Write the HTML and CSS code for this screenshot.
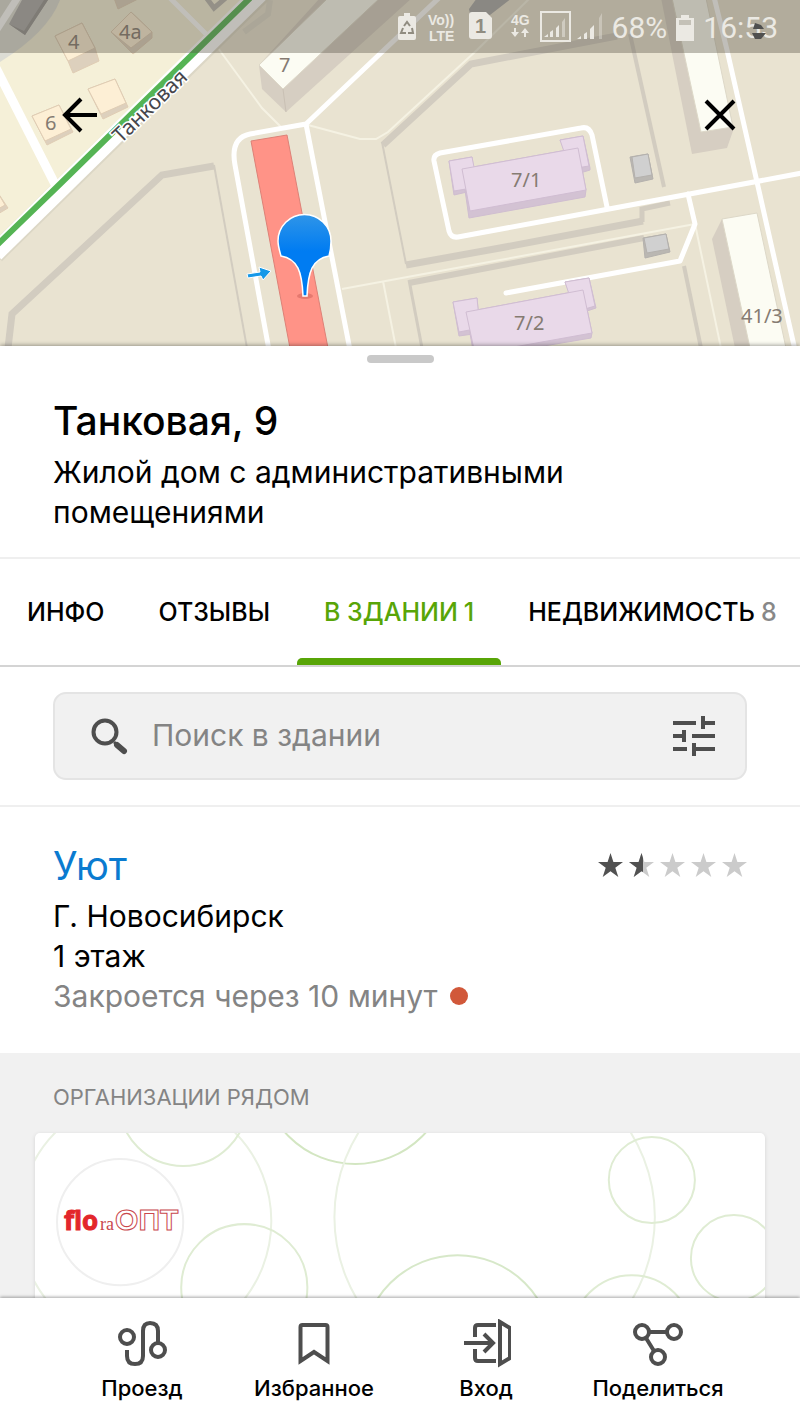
FILE: index.html
```html
<!DOCTYPE html>
<html lang="ru">
<head>
<meta charset="utf-8">
<meta name="viewport" content="width=device-width, initial-scale=1">
<title>Танковая, 9</title>
<link rel="stylesheet" href="styles.css">
</head>
<body>
<div class="app">
  <header class="map">
    <svg class="map-canvas" viewBox="0 0 800 346" preserveAspectRatio="xMidYMid slice" role="img" aria-label="Карта">
      <defs>
        <linearGradient id="pin" x1="0" y1="0" x2="0" y2="1"><stop offset="0" stop-color="#2f95e8"/><stop offset=".45" stop-color="#007cf2"/><stop offset="1" stop-color="#007cf2"/></linearGradient>
      </defs>
      <rect width="800" height="346" fill="#e9e3d1"/>
      <path d="M0 0H249L0 243Z" fill="#f5f0d8"/>
      <path d="M0 0H60Q48 32 0 62Z" fill="#dcdcd4"/>
      <path d="M-4 31L18-3" stroke="#fff" stroke-width="7"/>
      <path d="M9 24L22 0H48L25 35Z" fill="#aaa9a9"/><path d="M9 24L24 31L44 0H48L25 35Z" fill="#959391"/>
      <!-- fences -->
      <g fill="none" stroke="#d2ccc0">
        <path d="M8 348L12 314L162 175L214 166" stroke-width="7"/>
        <path d="M214 165L247 348" stroke-width="2"/>
        <path d="M383 145L471 64L617 36" stroke-width="7"/>
        <path d="M382 142L406 264" stroke-width="2"/>
        <path d="M406 265L500 248L643 221" stroke-width="7"/>
        <path d="M642 222V209L670 203" stroke-width="5"/>
        <path d="M644 238L409 283" stroke-width="6"/>
        <path d="M409 280L422 348" stroke-width="3"/>
        <path d="M630 34L664 187" stroke-width="4"/>
        <path d="M684 266L701 348" stroke-width="4"/>
        <path d="M205-4L214 8L228-4" stroke="#b8b5af" stroke-width="5"/>
        <path d="M244 32L268 14L270 0" stroke="#ddd9ca" stroke-width="6"/>
      </g>
      <!-- footpaths -->
      <g fill="none" stroke="#f5f2e3" stroke-width="2">
        <path d="M218 48L262 108L281 127M308 125L360 139H376L388 132L477 50L532-4M342 289L500 260L695 224M383 281L396 348M695 224L721 348"/>
      </g>
      <!-- roads -->
      <g fill="none" stroke="#fff" stroke-linejoin="round">
        <path d="M-5 254L262-7" stroke="#dcd7c6" stroke-width="20"/>
        <path d="M-5 253L260-7" stroke-width="18"/>
        <path d="M-4 68L57 188" stroke-width="9"/>
        <path d="M170-2L208 36" stroke-width="5"/>
        <path d="M269 350L235 165Q230 138 250 134L306 124L441-4M306 124L350 350" stroke-width="5"/>
        <path d="M607 207L592 135Q589 126 581 128L440 153Q433 155 434 161L449 231Q451 238 458 237L550 220L802 173" stroke-width="5"/>
        <path d="M506 293L680 261L695 224L688 194" stroke-width="5" stroke-linecap="round"/>
        <path d="M714-3L727 50L757 182L795 350" stroke-width="5"/>
      </g>
      <path d="M-4 246L60 184L250-2" stroke="#55b454" stroke-width="6" fill="none"/>
      <!-- small houses -->
      <g stroke="#e0cdb4" stroke-width="1">
        <path d="M55 36L68 61L73 73L99 61L95 48L82 23Z" fill="#ddd0bd"/><path d="M55 36L82 23L95 48L68 61Z" fill="#fdefd5"/>
        <path d="M111 32L133 54L152 38V32L131 12Z" fill="#ddd0bd"/><path d="M131 12L152 32L131 48L111 32Z" fill="#fdefd5"/>
        <path d="M114-2L118 9L140-2Z" fill="#ddd0bd"/>
        <path d="M88 89L103 119L128 107L115 79Z" fill="#ddd0bd"/><path d="M88 89L115 79L126 103L101 114Z" fill="#fdefd5"/>
        <path d="M32 116L47 145L73 132L59 105Z" fill="#ddd0bd"/><path d="M32 116L59 105L71 129L45 141Z" fill="#fdefd5"/>
        <path d="M-2 193L8 208L-2 214Z" fill="#ddd0bd"/><path d="M-2 193L5 205L-2 209Z" fill="#fdefd5"/>
      </g>
      <!-- tall houses -->
      <g fill="#d6cec2">
        <path d="M259 65L262 89L286 112L412-2H320Z"/>
        <path d="M661-2L692 154L727 148L734 128L701-2Z"/>
        <path d="M712 239L722 219L760 348H735Z"/>
      </g>
      <path d="M286 112L283 89L259 65" fill="none" stroke="#c9c0b4"/>
      <g fill="#fcfcf3" stroke="#ddd8c8" stroke-width="1">
        <path d="M259 65L283 89L380-2H328Z"/>
        <path d="M672-2L701 132L733 127L706-2Z"/>
        <path d="M722 219L757 213L786 348H750Z"/>
      </g>
      <path d="M469 9L477-2H512L490 15L470 14Z" fill="#a9a8a8"/>
      <!-- public buildings -->
      <g stroke="#cfbdd0" stroke-width="1" fill="#d3c2d3">
        <path d="M449 161L454 195L476 190L472 157Z"/><path d="M560 140L583 136L590 168V170L580 173Z"/><path d="M462 169L469 218L585 197L586 190L578 148Z"/>
        <path d="M453 302L459 336L480 333L477 298Z"/><path d="M565 282L589 278L596 308L578 314Z"/><path d="M466 312L473 350H520L591 338L592 333L583 290Z"/>
      </g>
      <g stroke="#d0bdd2" stroke-width="1" fill="#e9d9e9">
        <path d="M449 161L472 157L478 187L454 191Z"/><path d="M560 140L583 136L589 166L570 169Z"/><path d="M462 169L578 148L586 190L470 211Z"/>
        <path d="M453 302L477 298L480 328L459 332Z"/><path d="M565 282L589 278L595 306L575 312Z"/><path d="M466 312L583 290L592 333L475 354Z"/>
      </g>
      <g stroke="#b4b1ad" stroke-width="1">
        <path d="M630 157L635 183L653 179L648 154Z" fill="#bab7b2"/><path d="M632 157L648 154L652 175L635 178Z" fill="#d0d0d0"/>
        <path d="M643 238L645 258L670 252L666 234Z" fill="#bab7b2"/><path d="M644 238L666 234L669 249L647 253Z" fill="#d0d0d0"/>
      </g>
      <path d="M251 141L287 135L328 348H290Z" fill="#ff9387" stroke="#dd8177"/>
      <!-- entrance and pin -->
      <path d="M247 274L260 272L259 267L271 271L263 280L261 276L248 278Z" fill="#1598e8" stroke="#fff" stroke-width="1"/>
      <ellipse cx="305" cy="296" rx="8" ry="3" fill="#e5796f"/>
      <path d="M303 296C302 272 298 259 281 256C279 249 278 246 278 241A26.500 26.500 0 0 1 331 241C331 246 331 249 329 256C312 259 308 272 307 296Z" fill="url(#pin)" stroke="#fff" stroke-width="1.500"/>
      <!-- labels -->
      <g class="map-label">
        <text x="68" y="49">4</text><text x="119" y="39">4а</text><text x="45" y="130">6</text><text x="279" y="72">7</text>
        <text x="511" y="187">7/1</text><text x="514" y="330">7/2</text><text x="741" y="323">41/3</text>
        <text class="street" transform="translate(121 144) rotate(-44)">Танковая</text>
      </g>
    </svg>
    <div class="status">
      <svg class="status-icons" viewBox="0 0 210 34" aria-hidden="true">
        <path d="M6 5H8V2H14V5H18Q20 5 20 7V27Q20 29 18 29H4Q2 29 2 27V7Q2 5 4 5Z" fill="currentColor"/>
        <path d="M8 15L11 11L14 15M16 17L17 22H12M10 22H5L7 17" fill="none" stroke="#908c80" stroke-width="2"/>
        <g class="status-mini"><text x="32" y="14">Vo))</text><text x="33" y="30">LTE</text><text x="115" y="14">4G</text></g>
        <path d="M76 1H90L96 7V25Q96 28 93 28H76Q73 28 73 25V4Q73 1 76 1Z" fill="currentColor"/>
        <text class="status-sim" x="79" y="22">1</text>
        <path d="M118 17V21H115L119 26L123 21H120V17ZM128 26V22H125L129 17L133 22H130V26Z" fill="currentColor"/>
        <rect x="145" y="1" width="29" height="29" fill="none" stroke="currentColor" stroke-width="2"/>
        <path d="M148 26H152V23ZM154 26H157V19L154 21ZM160 26H163V14L160 17Z" fill="currentColor"/>
        <path d="M166 26H169V7L166 11Z" fill="currentColor" opacity=".5"/>
        <path d="M181 28H185V25ZM188 28H191V21L188 23ZM194 28H198V14L194 18Z" fill="currentColor"/>
        <path d="M203 28H206V2L203 7Z" fill="currentColor" opacity=".4"/>
      </svg>
      <span>68%</span>
      <svg class="battery" viewBox="0 0 18 28" aria-hidden="true"><path d="M0 4H5V1H13V4H18V27H0Z" fill="currentColor"/><path d="M3 6H15V11H3Z" fill="#aaa69a" opacity=".6"/></svg>
      <span class="clock">16:53</span>
      <svg class="speck" viewBox="0 0 18 20" aria-hidden="true"><path d="M5 2L11 4L14 8H3ZM2 12H16L11 18H5Z" fill="#50504f"/></svg>
    </div>
    <div class="map-actions">
      <button type="button" aria-label="Назад"><svg viewBox="0 0 36 36"><path d="M35 18H3M19 2L3 18L19 34" fill="none" stroke="#000" stroke-width="4"/></svg></button>
      <button type="button" aria-label="Закрыть"><svg viewBox="0 0 36 36"><path d="M4 4L32 32M32 4L4 32" fill="none" stroke="#000" stroke-width="4"/></svg></button>
    </div>
  </header>

  <main class="sheet">
    <div class="handle"></div>
    <section class="heading">
      <h1>Танковая, 9</h1>
      <p>Жилой дом с административными помещениями</p>
    </section>
    <nav class="tabs" aria-label="Разделы">
      <a href="#info">ИНФО</a>
      <a href="#reviews">ОТЗЫВЫ</a>
      <a href="#inside" class="active" aria-current="page">В ЗДАНИИ<span class="count">1</span></a>
      <a href="#estate">НЕДВИЖИМОСТЬ<span class="count">8</span></a>
    </nav>
    <form class="search-row">
      <div class="search">
        <svg class="search-icon" viewBox="0 0 38 38" aria-hidden="true"><circle cx="15" cy="15" r="11.500" fill="none" stroke="#4e4e4e" stroke-width="4"/><path d="M24 25L34 34" stroke="#4e4e4e" stroke-width="3"/><path d="M27 28L34 34" stroke="#4e4e4e" stroke-width="6" stroke-linecap="round"/></svg>
        <input type="search" placeholder="Поиск в здании" aria-label="Поиск в здании">
        <button type="button" aria-label="Фильтры"><svg viewBox="0 0 42 40"><path d="M0 7H23M29 7H42M30 0V13M0 20H12M19 20H42M11 14V26M0 33H14M20 33H42M21 27V40" fill="none" stroke="#4e4e4e" stroke-width="4"/></svg></button>
      </div>
    </form>
    <article class="place">
      <div class="place-top">
        <h2><a href="#uyut">Уют</a></h2>
        <svg class="stars" viewBox="0 0 149 26" role="img" aria-label="Оценка 1,5 из 5">
          <defs><path id="star" d="M12.500 0L15.400 9H25L17.300 14.700L20.300 24L12.500 18.300L4.700 24L7.700 14.700L0 9H9.600Z"/></defs>
          <use href="#star" fill="#515151"/>
          <use href="#star" x="31" fill="#cbcbcb"/><path d="M43.500 0L45 5V19L43.500 18.300L35.700 24L38.700 14.700L31 9H40.600Z" fill="#515151"/>
          <use href="#star" x="62" fill="#cbcbcb"/><use href="#star" x="93" fill="#cbcbcb"/><use href="#star" x="124" fill="#cbcbcb"/>
        </svg>
      </div>
      <p>Г. Новосибирск</p>
      <p>1 этаж</p>
      <p class="closing"><span>Закроется через 10 минут</span><i class="dot"></i></p>
    </article>
    <section class="nearby">
      <h3>ОРГАНИЗАЦИИ РЯДОМ</h3>
      <a class="card" href="#flora" aria-label="floraОПТ">
        <svg viewBox="0 0 729 200" preserveAspectRatio="xMinYMin slice">
          <g fill="none" stroke="#dfecd3" stroke-width="2">
            <circle cx="110" cy="88" r="126" stroke="#eaf1e3"/>
            <circle cx="148" cy="-31" r="64"/>
            <circle cx="320" cy="-63" r="94" stroke="#d3e6c2"/>
            <circle cx="459" cy="84" r="160" stroke="#eaf1e3"/>
            <circle cx="209" cy="154" r="63"/>
            <circle cx="422" cy="217" r="95" stroke="#d7e8c9"/>
            <circle cx="616" cy="47" r="43"/>
            <circle cx="698" cy="125" r="43"/>
            <circle cx="596" cy="202" r="60"/>
          </g>
          <circle cx="85" cy="89" r="63" fill="#fff" stroke="#efefef" stroke-width="2"/>
          <text class="logo-flo" x="29" y="97">flo</text>
          <text class="logo-ra" x="65" y="97">ra</text>
          <text class="logo-opt" x="80" y="97">ОПТ</text>
        </svg>
      </a>
    </section>
  </main>

  <nav class="bottom" aria-label="Действия">
    <button type="button">
      <svg viewBox="0 0 50 50"><g fill="none" stroke="#4e4e4e" stroke-width="4"><circle cx="10" cy="18" r="7"/><circle cx="41" cy="31" r="7"/><path d="M10 31V37Q10 45 18 45Q26 45 26 37V12Q26 4 33 4Q41 4 41 12V24"/></g></svg>
      <span>Проезд</span>
    </button>
    <button type="button">
      <svg viewBox="0 0 50 50"><path d="M11.500 42V8Q11.500 6 13.500 6H36.500Q38.500 6 38.500 8V42L25 33Z" fill="none" stroke="#4e4e4e" stroke-width="4"/></svg>
      <span>Избранное</span>
    </button>
    <button type="button">
      <svg viewBox="0 0 50 50"><g fill="none" stroke="#4e4e4e" stroke-width="4"><path d="M35 6H17Q14 6 14 9V18M14 30V39Q14 42 17 42H35M3 24H32M23 15L32 24L23 33M39 3L49 9V39L39 45Z"/></g></svg>
      <span>Вход</span>
    </button>
    <button type="button">
      <svg viewBox="0 0 50 50"><g fill="none" stroke="#4e4e4e" stroke-width="4"><circle cx="9" cy="13" r="7"/><circle cx="41" cy="13" r="7"/><circle cx="25" cy="38" r="7"/><path d="M16 13H34M13 19L21 32"/></g></svg>
      <span>Поделиться</span>
    </button>
  </nav>
</div>
</body>
</html>
```
FILE: styles.css
```css
* { box-sizing: border-box; }
body { margin: 0; background: #fff; color: #000; font: 30px/40px Inter, "Liberation Sans", sans-serif; }
h1, h2, h3, p { margin: 0; font-weight: 400; }
a { color: inherit; text-decoration: none; }
button { padding: 0; border: 0; background: none; color: inherit; font: inherit; cursor: pointer; }
svg { display: block; }

.app { display: flex; flex-direction: column; height: 100vh; overflow: hidden; }

.map { position: relative; flex: none; }
.map-canvas { width: 100%; height: 346px; }
.map-label { fill: #857b72; font: 20px "Noto Sans", sans-serif; paint-order: stroke; }
.street { fill: #46464c; stroke: #fff; stroke-width: 3px; font-size: 21px; }
.status { position: absolute; inset: 0 0 auto; display: flex; align-items: center; justify-content: flex-end; height: 53px; padding: 3px 22px 0 0; background: rgb(90 84 72 / 38%); color: #ebe9e3; font: 30px/40px Roboto, sans-serif; }
.status-icons { width: 210px; height: 34px; margin-right: 6px; }
.status-mini { fill: currentColor; font: 700 14px "Liberation Sans", sans-serif; }
.status-sim { fill: #908c80; font: 700 20px "Liberation Sans", sans-serif; }
.battery { width: 18px; height: 28px; margin: 0 9px; }
.speck { position: absolute; right: 32px; top: 21px; width: 18px; height: 20px; }
.map-actions { position: absolute; inset: 97px 62px auto; display: flex; justify-content: space-between; }
.map-actions svg { width: 36px; height: 36px; }

.sheet { position: relative; flex: 1; min-height: 0; overflow: hidden; background: #fff; box-shadow: 0 -1px 4px rgb(0 0 0 / 35%); }
.handle { width: 67px; height: 8px; margin: 9px auto 0; border-radius: 4px; background: #c9c9c9; }
.heading { padding: 32px 53px 25px; border-bottom: 2px solid #efefef; }
h1 { margin-bottom: 5px; font-size: 39px; line-height: 52px; font-weight: 500; }

.tabs { display: flex; position: relative; height: 108px; overflow: hidden; border-bottom: 2px solid #d4d4d4; font-size: 25px; font-weight: 500; }
.tabs a { flex: none; padding: 33px 27px 0; white-space: nowrap; }
.tabs .active { position: relative; color: #58a507; }
.tabs .active::after { content: ""; position: absolute; inset: auto 0 0; height: 7px; border-radius: 5px 5px 0 0; background: #58a507; }
.count { margin-left: 6px; color: #888; }
.active .count { color: inherit; }

.search-row { padding: 25px 53px; border-bottom: 2px solid #efefef; }
.search { display: flex; align-items: center; height: 88px; padding: 0 30px 0 35px; border: 2px solid #e4e4e4; border-radius: 13px; background: #f1f1f1; }
.search-icon { flex: none; width: 38px; height: 38px; margin-right: 24px; }
.search input { flex: 1; min-width: 0; padding: 0 0 2px; border: 0; outline: 0; background: none; font: inherit; }
.search input::placeholder { color: #848484; opacity: 1; }
.search button svg { width: 42px; height: 40px; }

.place { padding: 35px 53px 37px; }
.place-top { display: flex; align-items: center; justify-content: space-between; margin-bottom: 6px; }
h2 { font-size: 39px; line-height: 48px; color: #0a7bd0; }
.stars { width: 149px; height: 26px; }
.closing { display: flex; align-items: center; gap: 12px; color: #848484; }
.dot { width: 18px; height: 18px; border-radius: 50%; background: #d1583a; }

.nearby { padding: 24px 35px 0; background: #f1f1f1; }
h3 { margin: 0 18px 16px; color: #848484; font-size: 22px; }
.card { display: block; overflow: hidden; border-radius: 5px; background: #fff; box-shadow: 0 1px 4px rgb(0 0 0 / 12%); }
.card svg { width: 100%; height: 200px; }
.logo-flo { fill: #e3262b; stroke: #e3262b; stroke-width: 1px; font: 700 26px "Open Sans", sans-serif; }
.logo-ra { fill: #c9474c; stroke: #c9474c; font: 18px "Liberation Serif", serif; stroke-width: 0; }
.logo-opt { fill: #fff; stroke: #c9474c; stroke-width: 1px; font: 700 30px "Liberation Sans", sans-serif; }

.bottom { position: relative; flex: none; display: flex; padding: 21px 56px 19px; background: #fff; box-shadow: 0 -1px 3px rgb(0 0 0 / 35%); }
.bottom button { flex: 1; display: flex; flex-direction: column; align-items: center; gap: 4px; font-size: 22px; font-weight: 500; line-height: 30px; }
.bottom svg { width: 50px; height: 50px; }
```
